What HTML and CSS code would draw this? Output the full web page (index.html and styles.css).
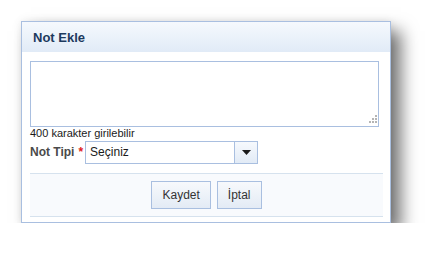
FILE: index.html
```html
<!DOCTYPE html>
<html lang="tr">
<head>
    <meta charset="UTF-8">
    <title>Not Ekle</title>
    <link rel="stylesheet" href="styles.css">
</head>
<body>
    <div class="dialog">
        <div class="dialog-header">Not Ekle</div>
        <div class="dialog-body">
            <div class="note-box">
                <textarea id="note-text"></textarea>
                <span class="grip">
                    <svg width="8" height="8" viewBox="0 0 8 8">
                        <rect x="6" y="0" width="2" height="2" fill="#b5b5b5"/>
                        <rect x="3" y="3" width="2" height="2" fill="#b5b5b5"/>
                        <rect x="6" y="3" width="2" height="2" fill="#b5b5b5"/>
                        <rect x="0" y="6" width="2" height="2" fill="#b5b5b5"/>
                        <rect x="3" y="6" width="2" height="2" fill="#b5b5b5"/>
                        <rect x="6" y="6" width="2" height="2" fill="#b5b5b5"/>
                    </svg>
                </span>
            </div>
            <div class="hint">400 karakter girilebilir</div>
            <div class="form-row">
                <label for="note-type">Not Tipi</label>
                <span class="required">*</span>
                <div class="combo">
                    <span class="combo-text" id="note-type">Seçiniz</span>
                    <span class="combo-btn">
                        <svg width="9" height="5" viewBox="0 0 9 5"><polygon points="0,0 9,0 4.5,5" fill="#1a1a1a"/></svg>
                    </span>
                </div>
            </div>
        </div>
        <div class="dialog-footer">
            <button class="btn">Kaydet</button>
            <button class="btn">İptal</button>
        </div>
    </div>
</body>
</html>
```

FILE: styles.css
```css
:root {
    --border-blue: #a9bfe0; --header-text: #1d3a5e; --text: #333333;
    --footer-bg: #f8fafd; --footer-line: #d6e2ee;
}
body { margin: 0; background: #ffffff; font-family: "Liberation Sans", Arial, sans-serif; color: var(--text); }
.dialog { box-sizing: border-box; width: 370px; height: 202px; margin: 21px 0 0 21px; background: #ffffff; border: 1px solid var(--border-blue); box-shadow: 10px 10px 16px rgba(0, 0, 0, 0.55), 0 0 8px rgba(0, 0, 0, 0.08); }
.dialog-header { height: 30px; line-height: 31px; padding-left: 11px; background: linear-gradient(#f5f9fd, #e1ebf7); font-size: 13px; font-weight: bold; color: var(--header-text); }
.dialog-body { padding: 9px 9px 0 8px; }
.note-box { position: relative; height: 66px; }
#note-text { display: block; box-sizing: border-box; width: 349px; height: 66px; margin: 0; border: 1px solid var(--border-blue); resize: none; font-family: inherit; }
.grip { position: absolute; left: 339px; bottom: 4px; line-height: 0; }
.hint { font-size: 11px; line-height: 13px; height: 14px; color: #1a1a1a; }
.form-row { display: flex; align-items: center; height: 22px; }
.form-row label { font-size: 12px; font-weight: bold; color: #4a4a4a; }
.required { color: #e02020; font-size: 12px; font-weight: bold; margin: 0 2px 0 4px; }
.combo { display: flex; box-sizing: border-box; width: 173px; height: 23px; border: 1px solid var(--border-blue); }
.combo-text { flex: 1; padding-left: 4px; font-size: 12px; line-height: 21px; color: #1a1a1a; }
.combo-btn { display: flex; align-items: center; justify-content: center; width: 22px; border-left: 1px solid var(--border-blue); background: linear-gradient(#f6f9fd, #e2ebf6); }
.dialog-footer { display: flex; justify-content: center; gap: 6px; margin: 10px 7px 0 8px; padding: 7px 0 7px; background: var(--footer-bg); border-top: 1px solid var(--footer-line); border-bottom: 1px solid var(--footer-line); }
.btn { box-sizing: border-box; height: 28px; padding: 0 10px; border: 1px solid var(--border-blue); background: linear-gradient(#f7f9fc, #e3ebf5); font-family: inherit; font-size: 12px; color: #333; }
```
